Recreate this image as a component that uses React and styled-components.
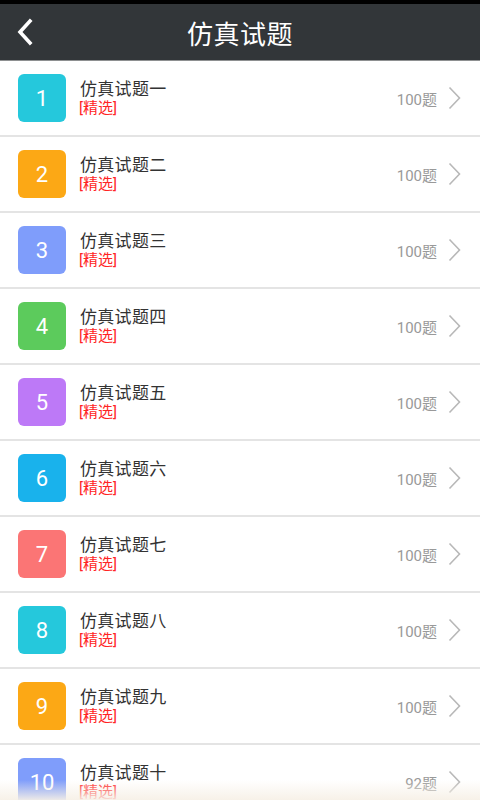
import React from "react";
import styled, { createGlobalStyle } from "styled-components";

const Global = createGlobalStyle`
  html, body { margin: 0; padding: 0; background: #fff; overflow: hidden; }
  body { font-family: Roboto, "Noto Sans CJK SC", sans-serif; }
  * { box-sizing: border-box; }
`;

const Page = styled.div`
  width: 480px;
  height: 800px;
  overflow: hidden;
  position: relative;
  background: #fff;
`;

const StatusBar = styled.div`
  height: 4px;
  background: #000;
`;

const Header = styled.header`
  height: 57px;
  background: #323639;
  border-bottom: 1px solid #8e9091;
  display: flex;
  align-items: center;
  justify-content: center;
  position: relative;
`;

const BackButton = styled.button`
  position: absolute;
  left: 10px;
  top: 50%;
  transform: translateY(-50%);
  width: 30px;
  height: 40px;
  padding: 0;
  border: none;
  background: transparent;
  display: flex;
  align-items: center;
  justify-content: center;
`;

const Title = styled.h1`
  margin: 0;
  color: #fff;
  font-size: 26px;
  font-weight: 400;
  letter-spacing: 0.5px;
`;

const List = styled.ul`
  list-style: none;
  margin: 0;
  padding: 0;
`;

const Row = styled.li`
  height: 76px;
  border-bottom: 2px solid #e4e4e4;
  display: flex;
  align-items: center;
  padding: 0 19px 0 18px;
`;

const Badge = styled.div`
  width: 48px;
  height: 48px;
  border-radius: 6px;
  background: ${(p) => p.$color};
  color: #fff;
  font-size: 22px;
  display: flex;
  align-items: center;
  justify-content: center;
  flex-shrink: 0;
`;

const Info = styled.div`
  flex: 1;
  margin-left: 14px;
  display: flex;
  flex-direction: column;
  margin-top: 1px;
`;

const ItemTitle = styled.div`
  font-size: 17px;
  line-height: 20px;
  color: #333;
  letter-spacing: 0.3px;
`;

const Tag = styled.div`
  font-size: 15px;
  line-height: 19px;
  color: #ff2424;
  margin-left: -1px;
`;

const Count = styled.div`
  font-size: 15px;
  color: #999;
  margin-right: 11px;
`;

const Fade = styled.div`
  position: absolute;
  left: 0;
  right: 0;
  bottom: 0;
  height: 20px;
  background: linear-gradient(to bottom, rgba(248, 244, 236, 0), rgba(246, 240, 230, 0.92));
  pointer-events: none;
`;

const items = [
  { n: 1, t: "仿真试题一", c: "#25c8dc", q: "100题" },
  { n: 2, t: "仿真试题二", c: "#fca815", q: "100题" },
  { n: 3, t: "仿真试题三", c: "#7f9dfb", q: "100题" },
  { n: 4, t: "仿真试题四", c: "#5ccb5c", q: "100题" },
  { n: 5, t: "仿真试题五", c: "#bd79f7", q: "100题" },
  { n: 6, t: "仿真试题六", c: "#19b2ec", q: "100题" },
  { n: 7, t: "仿真试题七", c: "#fb7575", q: "100题" },
  { n: 8, t: "仿真试题八", c: "#25c8dc", q: "100题" },
  { n: 9, t: "仿真试题九", c: "#fca815", q: "100题" },
  { n: 10, t: "仿真试题十", c: "#7f9dfb", q: "92题" },
];

const Chevron = () => (
  <svg width="13" height="24" viewBox="0 0 13 24">
    <polyline points="1.5,1.5 11.5,12 1.5,22.5" fill="none" stroke="#b8b8b8" strokeWidth="1.6" />
  </svg>
);

export default function App() {
  return (
    <Page>
      <Global />
      <StatusBar />
      <Header>
        <BackButton aria-label="back">
          <svg width="20" height="28" viewBox="0 0 20 28">
            <polyline points="15,3 5,14 15,25" fill="none" stroke="#fff" strokeWidth="3.6" strokeLinecap="square" />
          </svg>
        </BackButton>
        <Title>仿真试题</Title>
      </Header>
      <List>
        {items.map((it) => (
          <Row key={it.n}>
            <Badge $color={it.c}>{it.n}</Badge>
            <Info>
              <ItemTitle>{it.t}</ItemTitle>
              <Tag>[精选]</Tag>
            </Info>
            <Count>{it.q}</Count>
            <Chevron />
          </Row>
        ))}
      </List>
      <Fade />
    </Page>
  );
}
